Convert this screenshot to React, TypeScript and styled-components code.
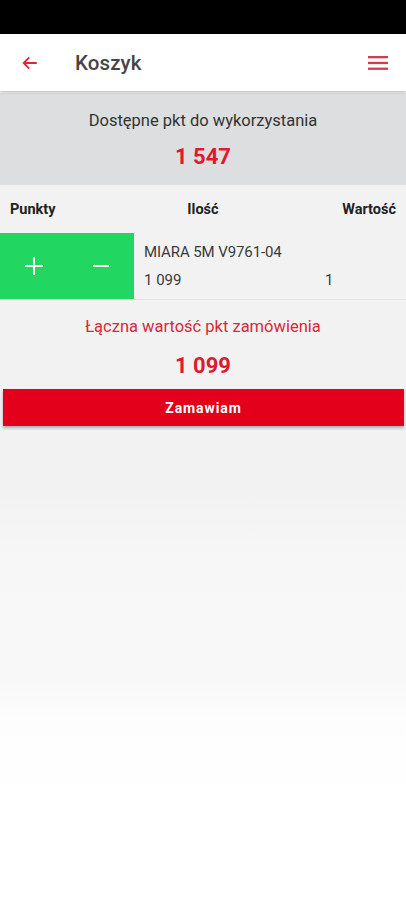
import React from "react";
import styled, { createGlobalStyle } from "styled-components";

const Global = createGlobalStyle`
  html, body { margin: 0; padding: 0; }
  body {
    font-family: Roboto, "Noto Sans", Arial, sans-serif;
    background: #fff;
  }
`;

const Page = styled.div`
  width: 406px;
  min-height: 900px;
  display: flex;
  flex-direction: column;
  background: linear-gradient(
    to bottom,
    #f2f2f2 0px,
    #f2f2f2 495px,
    #f7f7f7 560px,
    #f8f8f8 680px,
    #fdfdfd 720px,
    #ffffff 830px
  );
`;

const StatusBar = styled.div`
  height: 34px;
  background: #000;
`;

const Header = styled.header`
  height: 57px;
  background: #fff;
  display: flex;
  align-items: center;
  padding: 0 18px 0 20px;
  box-shadow: 0 1px 3px rgba(0, 0, 0, 0.25);
  position: relative;
  z-index: 1;
`;

const IconButton = styled.span`
  display: flex;
  align-items: center;
  justify-content: center;
  width: 20px;
  height: 20px;
`;

const Title = styled.h1`
  margin: 0 0 0 35px;
  flex: 1;
  font-size: 20.5px;
  font-weight: 500;
  color: #454545;
  letter-spacing: 0.1px;
`;

const Balance = styled.section`
  background: #dcdee0;
  margin-top: 2px;
  height: 92px;
  display: flex;
  flex-direction: column;
  align-items: center;
  padding-top: 18px;
  box-sizing: border-box;
`;

const BalanceLabel = styled.div`
  font-size: 16.5px;
  color: #333;
  line-height: 20px;
`;

const BigRed = styled.div<{ $gap: number }>`
  margin-top: ${(p) => p.$gap}px;
  font-size: 22px;
  font-weight: 700;
  color: #e0192d;
  line-height: 26px;
`;

const ColumnHeads = styled.div`
  display: grid;
  grid-template-columns: 1fr auto 1fr;
  align-items: center;
  height: 48px;
  padding: 0 10px 0 10px;
  font-size: 14.5px;
  font-weight: 700;
  color: #222;
`;

const HeadRight = styled.span`
  justify-self: end;
`;

const Row = styled.div`
  display: flex;
  height: 66px;
  border-bottom: 1px solid #e2e2e2;
`;

const Actions = styled.div`
  width: 134px;
  background: #21d761;
  display: flex;
  align-items: center;
  justify-content: space-around;
`;

const ActionBtn = styled.span`
  display: flex;
  align-items: center;
  justify-content: center;
  width: 40px;
  height: 40px;
`;

const Details = styled.div`
  flex: 1;
  padding: 10px 0 0 10px;
  display: flex;
  flex-direction: column;
  color: #3a3a3a;
  font-size: 15px;
`;

const ProductName = styled.div`
  line-height: 18px;
  letter-spacing: -0.1px;
`;

const ValuesLine = styled.div`
  display: flex;
  margin-top: 10px;
  line-height: 18px;
`;

const Price = styled.span`
  width: 181px;
`;

const Summary = styled.section`
  display: flex;
  flex-direction: column;
  align-items: center;
  padding-top: 17px;
`;

const SummaryLabel = styled.div`
  font-size: 16.5px;
  color: #d8283a;
  line-height: 20px;
`;

const OrderButton = styled.button`
  margin: 10px 2px 0 3px;
  height: 37px;
  border: none;
  background: #e3001b;
  color: #fff;
  font-family: Roboto, Arial, sans-serif;
  font-size: 14px;
  font-weight: 700;
  letter-spacing: 0.9px;
  box-shadow: 0 2px 3px rgba(0, 0, 0, 0.3);
  cursor: pointer;
`;

export default function App() {
  return (
    <>
      <Global />
      <Page>
        <StatusBar />
        <Header>
          <IconButton>
            <svg width="18" height="18" viewBox="0 0 24 24" fill="none">
              <path
                d="M21 12H4M11 4.5L3.5 12L11 19.5"
                stroke="#d8283a"
                strokeWidth="2.4"
              />
            </svg>
          </IconButton>
          <Title>Koszyk</Title>
          <IconButton>
            <svg width="20" height="16" viewBox="0 0 20 16">
              <rect x="0" y="1" width="20" height="2.3" fill="#d83a4b" />
              <rect x="0" y="6.8" width="20" height="2.3" fill="#d83a4b" />
              <rect x="0" y="12.6" width="20" height="2.3" fill="#d83a4b" />
            </svg>
          </IconButton>
        </Header>
        <Balance>
          <BalanceLabel>Dostępne pkt do wykorzystania</BalanceLabel>
          <BigRed $gap={13}>1 547</BigRed>
        </Balance>
        <ColumnHeads>
          <span>Punkty</span>
          <span>Ilość</span>
          <HeadRight>Wartość</HeadRight>
        </ColumnHeads>
        <Row>
          <Actions>
            <ActionBtn>
              <svg width="20" height="20" viewBox="0 0 20 20">
                <path d="M10 1V19M1 10H19" stroke="#fff" strokeWidth="2" />
              </svg>
            </ActionBtn>
            <ActionBtn>
              <svg width="20" height="20" viewBox="0 0 20 20">
                <path d="M2 10H18" stroke="#fff" strokeWidth="2" />
              </svg>
            </ActionBtn>
          </Actions>
          <Details>
            <ProductName>MIARA 5M V9761-04</ProductName>
            <ValuesLine>
              <Price>1 099</Price>
              <span>1</span>
            </ValuesLine>
          </Details>
        </Row>
        <Summary>
          <SummaryLabel>Łączna wartość pkt zamówienia</SummaryLabel>
          <BigRed $gap={16}>1 099</BigRed>
        </Summary>
        <OrderButton>Zamawiam</OrderButton>
      </Page>
    </>
  );
}
